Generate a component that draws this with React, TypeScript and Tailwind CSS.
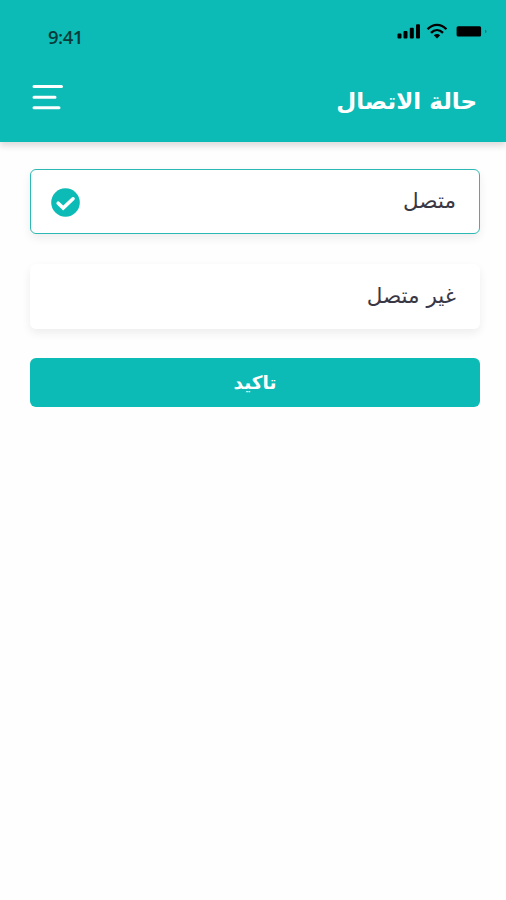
import { useState } from "react";

function StatusBar() {
  return (
    <div dir="ltr" className="flex justify-between pl-12 pr-[18px]">
      <span className="mt-[25px] font-['Open_Sans',sans-serif] text-[18.5px] leading-6 font-semibold tracking-[-0.5px] text-[#063b3b]">
        9:41
      </span>
      <div className="mt-[23px] flex h-4 items-center text-black">
        <svg width="24" height="16" viewBox="0 0 24 16" fill="currentColor">
          <rect x="0.5" y="10.5" width="4" height="5" rx="1" />
          <rect x="6.5" y="8" width="4" height="7.5" rx="1" />
          <rect x="12.8" y="4.8" width="4" height="10.7" rx="1" />
          <rect x="19" y="1.3" width="4" height="14.2" rx="1" />
        </svg>
        <svg
          width="22"
          height="16"
          viewBox="0 0 22 16"
          fill="none"
          stroke="currentColor"
          strokeWidth="2.4"
          className="ml-[5px]"
        >
          <path d="M1.6 6.2C7 0.4 15 0.4 20.4 6.2" />
          <path d="M5 9.8C8.6 6.2 13.4 6.2 17 9.8" />
          <path d="M11 15.6L7.8 12.2C9.6 10.6 12.4 10.6 14.2 12.2Z" fill="currentColor" stroke="none" />
        </svg>
        <svg width="32" height="16" viewBox="0 0 32 16" fill="currentColor" className="ml-2">
          <rect x="0.6" y="3.2" width="24.5" height="10.2" rx="1.5" />
          <path d="M29.2 6.8c1 .4 1.2 1 1.2 1.7s-.2 1.3-1.2 1.7z" opacity="0.4" />
        </svg>
      </div>
    </div>
  );
}

function Header() {
  return (
    <header className="h-[142px] bg-[#0cbbb6] shadow-[0_4px_6px_rgba(60,40,50,0.16)]">
      <StatusBar />
      <div className="mt-[29px] flex items-center justify-between pr-[29px] pl-8">
        <h1 className="text-[23px] leading-[46px] font-bold text-white">حالة الاتصال</h1>
        <button type="button" aria-label="القائمة" className="mb-[9px]">
          <svg
            width="32"
            height="28"
            viewBox="0 0 32 28"
            fill="none"
            stroke="white"
            strokeWidth="3"
            strokeLinecap="round"
          >
            <path d="M2 3.4h27.5M2 14.2h21M2 24.8h25" />
          </svg>
        </button>
      </div>
    </header>
  );
}

function CheckBadge() {
  return (
    <svg width="29" height="29" viewBox="0 0 29 29" fill="none" className="mt-px">
      <circle cx="14.5" cy="14.5" r="14.3" fill="#0cbbb6" />
      <path
        d="M7.2 15.2l5 4.8 9.8-9.2"
        stroke="white"
        strokeWidth="3.6"
        strokeLinecap="round"
      />
    </svg>
  );
}

const options = [
  { id: "online", label: "متصل" },
  { id: "offline", label: "غير متصل" },
];

export default function App() {
  const [selected, setSelected] = useState("online");

  return (
    <div dir="rtl" className="min-h-screen bg-[#fefefe] font-['DejaVu_Sans',sans-serif]">
      <Header />
      <main className="flex flex-col gap-[30px] pt-[27px] pr-[26px] pl-[30px]">
        {options.map((option) => (
          <button
            key={option.id}
            type="button"
            onClick={() => setSelected(option.id)}
            className={`flex h-[65px] items-center justify-between rounded-md border bg-white pr-[23px] pl-5 shadow-[0_4px_10px_rgba(0,0,0,0.07)] ${
              selected === option.id ? "border-[#2db9b3]" : "border-transparent"
            }`}
          >
            <span className="-mt-0.5 text-[21.5px] leading-8 text-[#3a3744]">{option.label}</span>
            {selected === option.id && <CheckBadge />}
          </button>
        ))}
        <button
          type="button"
          className="-mt-px h-[49px] rounded-md bg-[#0cbbb6] text-[18.5px] font-bold text-white"
        >
          تاكيد
        </button>
      </main>
    </div>
  );
}
